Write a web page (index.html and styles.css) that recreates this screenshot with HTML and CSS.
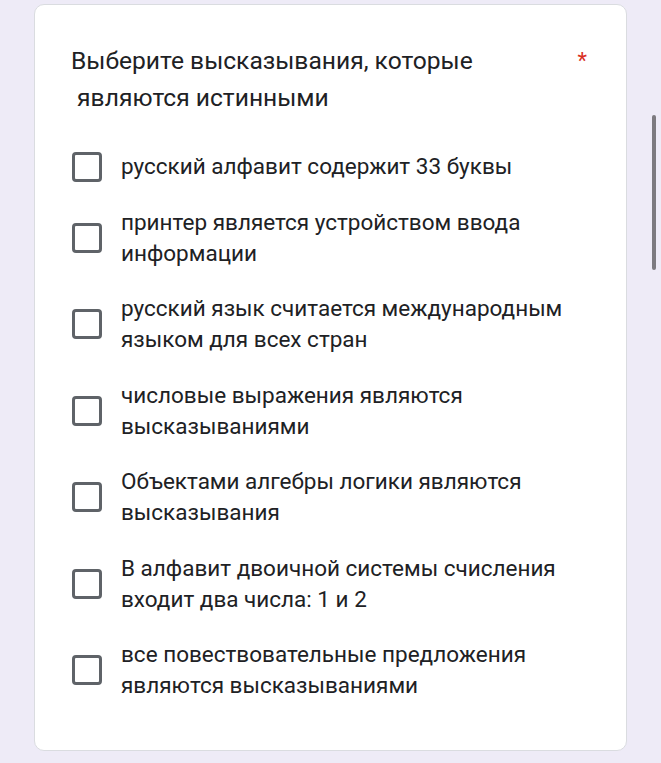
FILE: index.html
```html
<!DOCTYPE html>
<html lang="ru">
<head>
  <meta charset="UTF-8">
  <meta name="viewport" content="width=device-width, initial-scale=1.0">
  <title>Вопрос</title>
  <link rel="stylesheet" href="styles.css">
</head>
<body>
  <!-- Question card -->
  <div class="card">
    <div class="question-head">
      <div class="question-title">Выберите высказывания, которые<br>&nbsp;являются истинными</div>
      <span class="required">*</span>
    </div>

    <div class="options">
      <label class="option"><span class="box"></span><span class="option-text">русский алфавит содержит 33 буквы</span></label>
      <label class="option"><span class="box"></span><span class="option-text">принтер является устройством ввода информации</span></label>
      <label class="option"><span class="box"></span><span class="option-text">русский язык считается международным языком для всех стран</span></label>
      <label class="option"><span class="box"></span><span class="option-text">числовые выражения являются высказываниями</span></label>
      <label class="option"><span class="box"></span><span class="option-text">Объектами алгебры логики являются высказывания</span></label>
      <label class="option"><span class="box"></span><span class="option-text">В алфавит двоичной системы счисления входит два числа: 1 и 2</span></label>
      <label class="option"><span class="box"></span><span class="option-text">все повествовательные предложения являются высказываниями</span></label>
    </div>
  </div>

  <!-- Scroll indicator -->
  <div class="scroll-thumb"></div>
</body>
</html>
```

FILE: styles.css
```css
/* General Styles */
body {
  font-family: 'Roboto', 'Noto Sans', sans-serif;
  background: #eeebf7;
  color: #202124;
  margin: 0;
  padding: 4px 0 0;
}

/* Card */
.card {
  width: 593px;
  margin-left: 34px;
  box-sizing: border-box;
  background: #fff;
  border: 1px solid #dadce0;
  border-radius: 10px;
  padding: 37px 39px 49px 36px;
}

.question-head {
  display: flex;
  justify-content: space-between;
  align-items: flex-start;
}

.question-title {
  font-size: 24.6px;
  line-height: 37px;
}

.required {
  color: #d93025;
  font-size: 22px;
  line-height: 37px;
}

/* Options */
.options {
  margin-top: 35px;
  display: flex;
  flex-direction: column;
  gap: 24.5px;
}

.option {
  display: flex;
  align-items: center;
  gap: 19px;
  padding-left: 1px;
}

.box {
  flex: none;
  width: 30px;
  height: 30px;
  box-sizing: border-box;
  border: 3px solid #5f6368;
  border-radius: 4px;
}

.option-text {
  font-size: 22.5px;
  line-height: 31px;
  max-width: 460px;
}

/* Scroll indicator */
.scroll-thumb {
  position: fixed;
  top: 115px;
  left: 652px;
  width: 4px;
  height: 155px;
  border-radius: 2px;
  background: #7d7a80;
}
```
